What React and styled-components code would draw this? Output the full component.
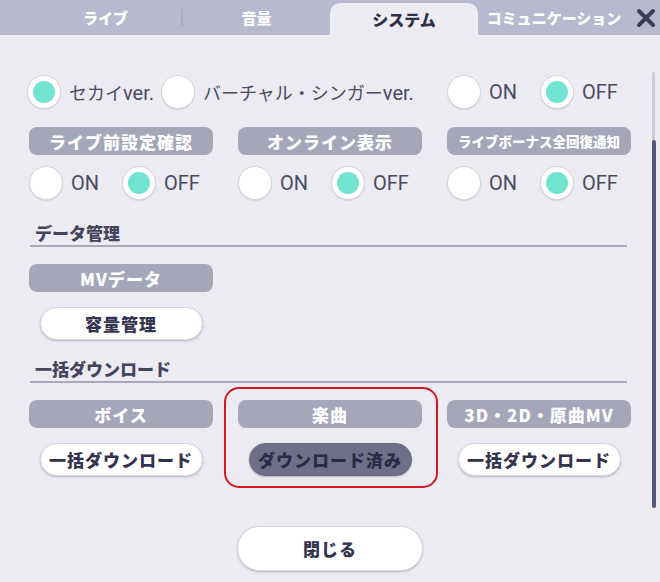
import styled, { createGlobalStyle } from "styled-components";

const GlobalStyle = createGlobalStyle`
  html, body {
    margin: 0;
    padding: 0;
    background: #ecebf2;
  }
  body {
    font-family: Roboto, "Noto Sans CJK JP", sans-serif;
  }
  * {
    box-sizing: border-box;
  }
`;

const Screen = styled.div`
  width: 660px;
  height: 582px;
  overflow: hidden;
  background: #ecebf2;
  display: flex;
  flex-direction: column;
`;

const TabBar = styled.nav`
  flex: 0 0 35px;
  height: 35px;
  background: #b8b9cf;
  display: flex;
  align-items: flex-end;
  padding-left: 30px;
`;

const Tab = styled.div`
  width: ${(p) => p.$width}px;
  height: ${(p) => (p.$active ? 32 : 35)}px;
  display: flex;
  align-items: center;
  justify-content: center;
  font-family: "Noto Sans CJK JP", sans-serif;
  font-weight: 900;
  font-size: ${(p) => (p.$active ? 16 : 15)}px;
  color: ${(p) => (p.$active ? "#2f2f4b" : "#ffffff")};
  background: ${(p) => (p.$active ? "#ecebf2" : "transparent")};
  border-radius: 10px 10px 0 0;
  white-space: nowrap;
`;

const TabDivider = styled.span`
  align-self: center;
  width: 2px;
  height: 17px;
  background: #a8aac1;
`;

const CloseButton = styled.button`
  align-self: center;
  border: none;
  background: none;
  padding: 0;
  margin-left: 4px;
  width: 24px;
  height: 24px;
  display: flex;
  align-items: center;
  justify-content: center;

  & svg {
    width: 20px;
    height: 20px;
  }
`;

const Body = styled.div`
  flex: 1;
  display: flex;
`;

const Main = styled.main`
  flex: 0 0 602px;
  margin-left: 29px;
  padding-top: 40px;
  display: flex;
  flex-direction: column;
`;

const Row = styled.div`
  display: grid;
  grid-template-columns: repeat(3, 184px);
  column-gap: 25px;
  margin-top: ${(p) => p.$mt || 0}px;
`;

const Cell = styled.div`
  grid-column: span ${(p) => p.$span || 1};
  display: flex;
  flex-direction: ${(p) => (p.$stack ? "column" : "row")};
  align-items: center;
  gap: ${(p) => p.$gap ?? 23}px;
  margin-left: ${(p) => p.$shift || 0}px;
  position: relative;

  ${(p) =>
    p.$highlight &&
    `
    &::after {
      content: "";
      position: absolute;
      top: -13px;
      bottom: -12px;
      left: -14px;
      right: -16px;
      border: 2.5px solid #d3161f;
      border-radius: 15px;
      pointer-events: none;
    }
  `}
`;

const Option = styled.label`
  display: flex;
  align-items: center;
  gap: 8px;
  font-size: 20px;
  color: #4a4a63;
  white-space: nowrap;
`;

const Jp = styled.span`
  font-family: "Noto Sans CJK JP", sans-serif;
  font-size: 18px;
`;

const Circle = styled.span`
  flex: 0 0 34px;
  width: 34px;
  height: 34px;
  border-radius: 50%;
  background: #ffffff;
  border: 1.5px solid #d6d3da;
  box-shadow: 0 1px 1px rgba(80, 70, 90, 0.15);
  display: flex;
  align-items: center;
  justify-content: center;

  &::after {
    content: "";
    width: 22px;
    height: 22px;
    border-radius: 50%;
    background: ${(p) => (p.$on ? "#70e3d1" : "transparent")};
  }
`;

const Tag = styled.div`
  width: 100%;
  height: 28px;
  border-radius: 8px;
  background: #a5a6ba;
  color: #ffffff;
  display: flex;
  align-items: center;
  justify-content: center;
  font-family: "Noto Sans CJK JP", sans-serif;
  font-weight: 900;
  font-size: ${(p) => (p.$small ? 13.5 : 17)}px;
  letter-spacing: ${(p) => (p.$small ? 0 : 1)}px;
  white-space: nowrap;
`;

const SectionTitle = styled.h2`
  margin: ${(p) => p.$mt}px 4px 0 1px;
  padding: 0 0 0 5px;
  height: 26px;
  line-height: 24px;
  border-bottom: 2px solid #a8a9ba;
  font-family: "Noto Sans CJK JP", sans-serif;
  font-weight: 900;
  font-size: 17px;
  color: #44445c;
`;

const PillButton = styled.button`
  width: ${(p) => p.$width || 163}px;
  height: ${(p) => p.$height || 33}px;
  border-radius: ${(p) => (p.$height || 33) / 2}px;
  border: 1px solid ${(p) => (p.$dark ? "#65667e" : "#d6d4dc")};
  background: ${(p) => (p.$dark ? "#6f7088" : "#ffffff")};
  box-shadow: 0 1px 2px rgba(60, 55, 80, 0.3);
  color: ${(p) => (p.$dark ? "#2a2a44" : "#33334d")};
  font-family: "Noto Sans CJK JP", sans-serif;
  font-weight: 900;
  font-size: 17px;
  letter-spacing: 1px;
  padding: 0;
  white-space: nowrap;
`;

const Footer = styled.div`
  margin-top: 50px;
  display: flex;
  justify-content: center;
`;

const ScrollTrack = styled.div`
  margin: 37px 0 0 21px;
  width: 3px;
  height: 436px;
  border-radius: 2px;
  background: #cbcbd6;
  display: flex;
  flex-direction: column;
`;

const ScrollThumb = styled.div`
  margin-top: 68px;
  flex: 1;
  width: 4px;
  border-radius: 2px;
  background: #54567a;
`;

function Radio({ on, children }) {
  return (
    <Option>
      <Circle $on={on} />
      {children}
    </Option>
  );
}

function OnOff({ value, shift }) {
  return (
    <Cell $shift={shift}>
      <Radio on={value}>ON</Radio>
      <Radio on={!value}>OFF</Radio>
    </Cell>
  );
}

const tabs = [
  { label: "ライブ", width: 151 },
  { label: "音量", width: 147 },
  { label: "システム", width: 148, active: true },
  { label: "コミュニケーション", width: 152 },
];

export default function App() {
  return (
    <Screen>
      <GlobalStyle />
      <TabBar>
        <Tab $width={tabs[0].width}>{tabs[0].label}</Tab>
        <TabDivider />
        {tabs.slice(1).map((t) => (
          <Tab key={t.label} $width={t.width} $active={t.active}>
            {t.label}
          </Tab>
        ))}
        <CloseButton aria-label="閉じる">
          <svg viewBox="0 0 20 20">
            <path
              d="M3 3 L17 17 M17 3 L3 17"
              stroke="#3d3d5a"
              strokeWidth="4"
              strokeLinecap="round"
            />
          </svg>
        </CloseButton>
      </TabBar>
      <Body>
        <Main>
          <Row>
            <Cell $span={2} $gap={7} $shift={-2}>
              <Radio on>
                <span>
                  <Jp>セカイ</Jp>ver.
                </span>
              </Radio>
              <Radio>
                <span>
                  <Jp>バーチャル・シンガー</Jp>ver.
                </span>
              </Radio>
            </Cell>
            <OnOff value={false} />
          </Row>

          <Row $mt={18}>
            <Tag>ライブ前設定確認</Tag>
            <Tag>オンライン表示</Tag>
            <Tag $small>ライブボーナス全回復通知</Tag>
          </Row>

          <Row $mt={11}>
            <OnOff value={false} />
            <OnOff value={false} />
            <OnOff value={false} />
          </Row>

          <SectionTitle $mt={21}>データ管理</SectionTitle>

          <Row $mt={17}>
            <Cell $stack $gap={15}>
              <Tag>MVデータ</Tag>
              <PillButton $height={33}>容量管理</PillButton>
            </Cell>
          </Row>

          <SectionTitle $mt={17}>一括ダウンロード</SectionTitle>

          <Row $mt={17}>
            <Cell $stack $gap={15}>
              <Tag>ボイス</Tag>
              <PillButton>一括ダウンロード</PillButton>
            </Cell>
            <Cell $stack $gap={15} $highlight>
              <Tag>楽曲</Tag>
              <PillButton $dark>ダウンロード済み</PillButton>
            </Cell>
            <Cell $stack $gap={15}>
              <Tag>3D・2D・原曲MV</Tag>
              <PillButton>一括ダウンロード</PillButton>
            </Cell>
          </Row>

          <Footer>
            <PillButton $width={186} $height={45}>
              閉じる
            </PillButton>
          </Footer>
        </Main>
        <ScrollTrack>
          <ScrollThumb />
        </ScrollTrack>
      </Body>
    </Screen>
  );
}
